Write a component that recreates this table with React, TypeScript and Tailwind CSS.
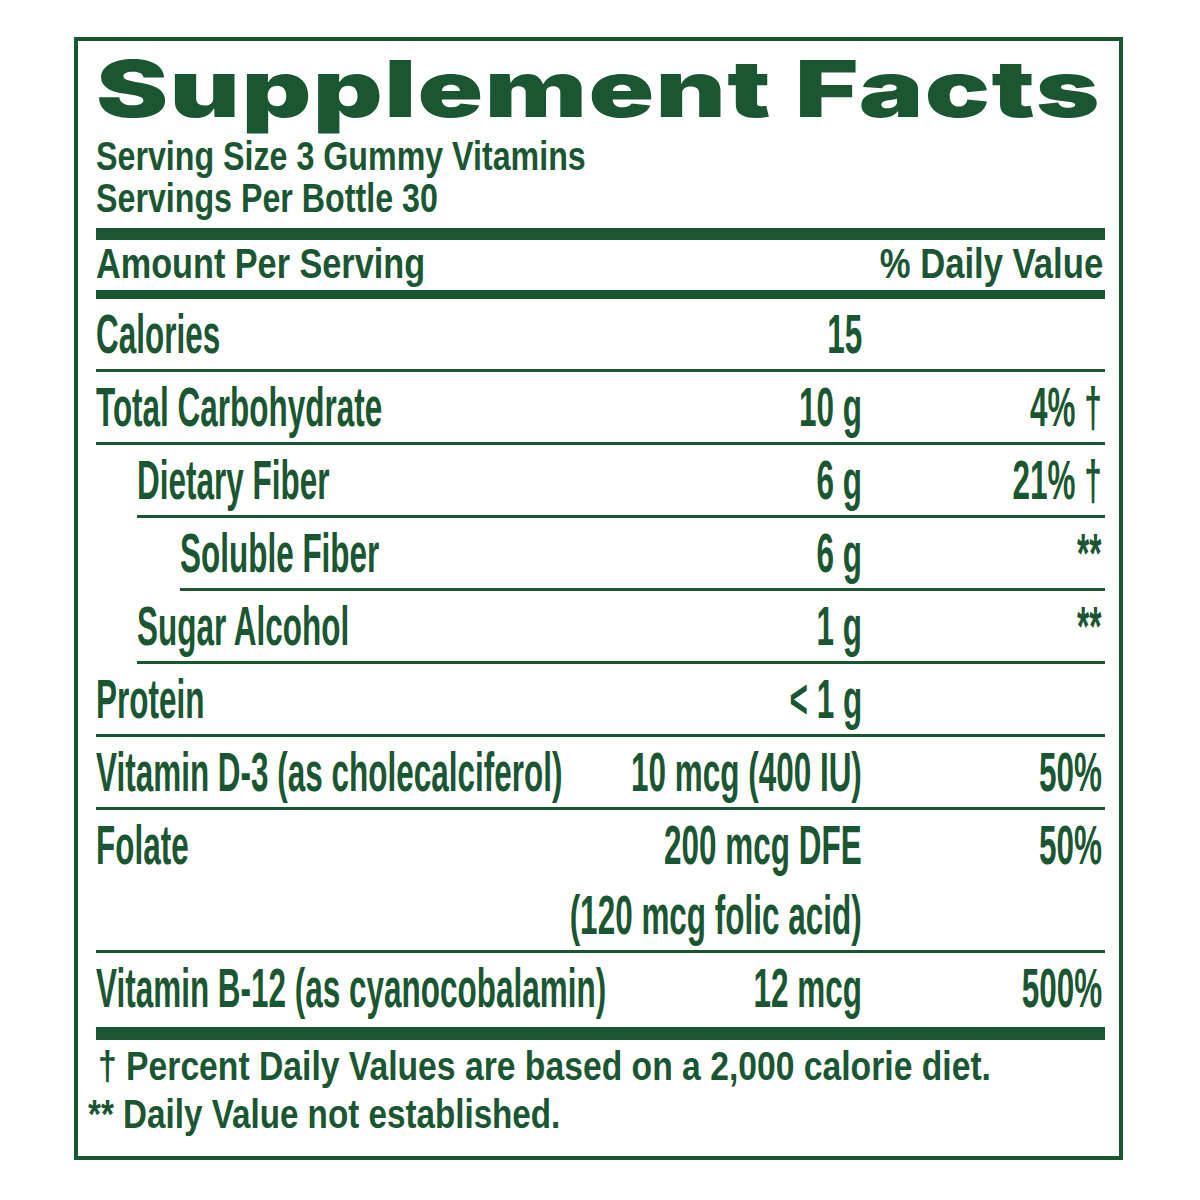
const body =
  "inline-block whitespace-nowrap text-[56px] leading-[70px] font-bold scale-x-[0.562]";

type RowProps = {
  name: string;
  amount?: string;
  amount2?: string;
  dv?: string;
  indent?: string;
  border?: boolean;
  height?: string;
};

function Row({ name, amount, amount2, dv, indent = "ml-0", border = true, height = "" }: RowProps) {
  return (
    <div
      className={`flex ${indent} ${height} ${border ? "border-b-[3px] border-[#1b5632]" : ""}`}
    >
      <div className="flex-1 min-w-0">
        <span className={`${body} origin-left`}>{name}</span>
      </div>
      <div className="w-[300px] shrink-0 flex flex-col items-end">
        {amount && <span className={`${body} origin-right`}>{amount}</span>}
        {amount2 && <span className={`${body} origin-right`}>{amount2}</span>}
      </div>
      <div className="w-[243px] shrink-0 flex justify-end pr-[3px]">
        {dv && <span className={`${body} origin-right`}>{dv}</span>}
      </div>
    </div>
  );
}

export default function App() {
  return (
    <div className="min-h-screen bg-white pt-[37px] pl-[74px] text-[#1b5632] font-['Liberation_Sans',Arial,sans-serif]">
      <div className="w-[1049px] border-[4px] border-[#1b5632] pl-[18px] pr-[14px] pb-[18px]">
        {/* title */}
        <div className="pt-[6px] h-[89px]">
          <span className="inline-block whitespace-nowrap origin-left scale-x-[1.39] font-['Inter',sans-serif] font-black text-[78px] leading-[84px] tracking-[1px]">
            Supplement Facts
          </span>
        </div>

        <div className="mt-[5px] text-[40px] leading-[42px] font-bold">
          <div>
            <span className="inline-block whitespace-nowrap origin-left scale-x-[0.805]">
              Serving Size 3 Gummy Vitamins
            </span>
          </div>
          <div>
            <span className="inline-block whitespace-nowrap origin-left scale-x-[0.805]">
              Servings Per Bottle 30
            </span>
          </div>
        </div>

        <div className="mt-[9px] h-[12px] bg-[#1b5632]" />

        <div className="flex justify-between h-[50px] text-[42px] leading-[47px] font-bold">
          <span className="inline-block whitespace-nowrap origin-left scale-x-[0.815]">
            Amount Per Serving
          </span>
          <span className="inline-block whitespace-nowrap origin-right scale-x-[0.825] pr-[2px]">
            % Daily Value
          </span>
        </div>

        <div className="h-[9px] bg-[#1b5632]" />

        <Row name="Calories" amount="15" />
        <Row name="Total Carbohydrate" amount="10 g" dv="4% †" />
        <Row name="Dietary Fiber" amount="6 g" dv="21% †" indent="ml-[41px]" />
        <Row name="Soluble Fiber" amount="6 g" dv="**" indent="ml-[84px]" />
        <Row name="Sugar Alcohol" amount="1 g" dv="**" indent="ml-[41px]" />
        <Row name="Protein" amount="< 1 g" />
        <Row name="Vitamin D-3 (as cholecalciferol)" amount="10 mcg (400 IU)" dv="50%" />
        <Row
          name="Folate"
          amount="200 mcg DFE"
          amount2="(120 mcg folic acid)"
          dv="50%"
        />
        <Row
          name="Vitamin B-12 (as cyanocobalamin)"
          amount="12 mcg"
          dv="500%"
          border={false}
          height="h-[74px]"
        />

        <div className="h-[13px] bg-[#1b5632]" />

        <div className="pt-[2px] text-[40px] leading-[48px] font-bold">
          <div className="ml-[2px]">
            <span className="inline-block whitespace-nowrap origin-left scale-x-[0.842]">
              † Percent Daily Values are based on a 2,000 calorie diet.
            </span>
          </div>
          <div className="-ml-[8px]">
            <span className="inline-block whitespace-nowrap origin-left scale-x-[0.83]">
              ** Daily Value not established.
            </span>
          </div>
        </div>
      </div>
    </div>
  );
}
